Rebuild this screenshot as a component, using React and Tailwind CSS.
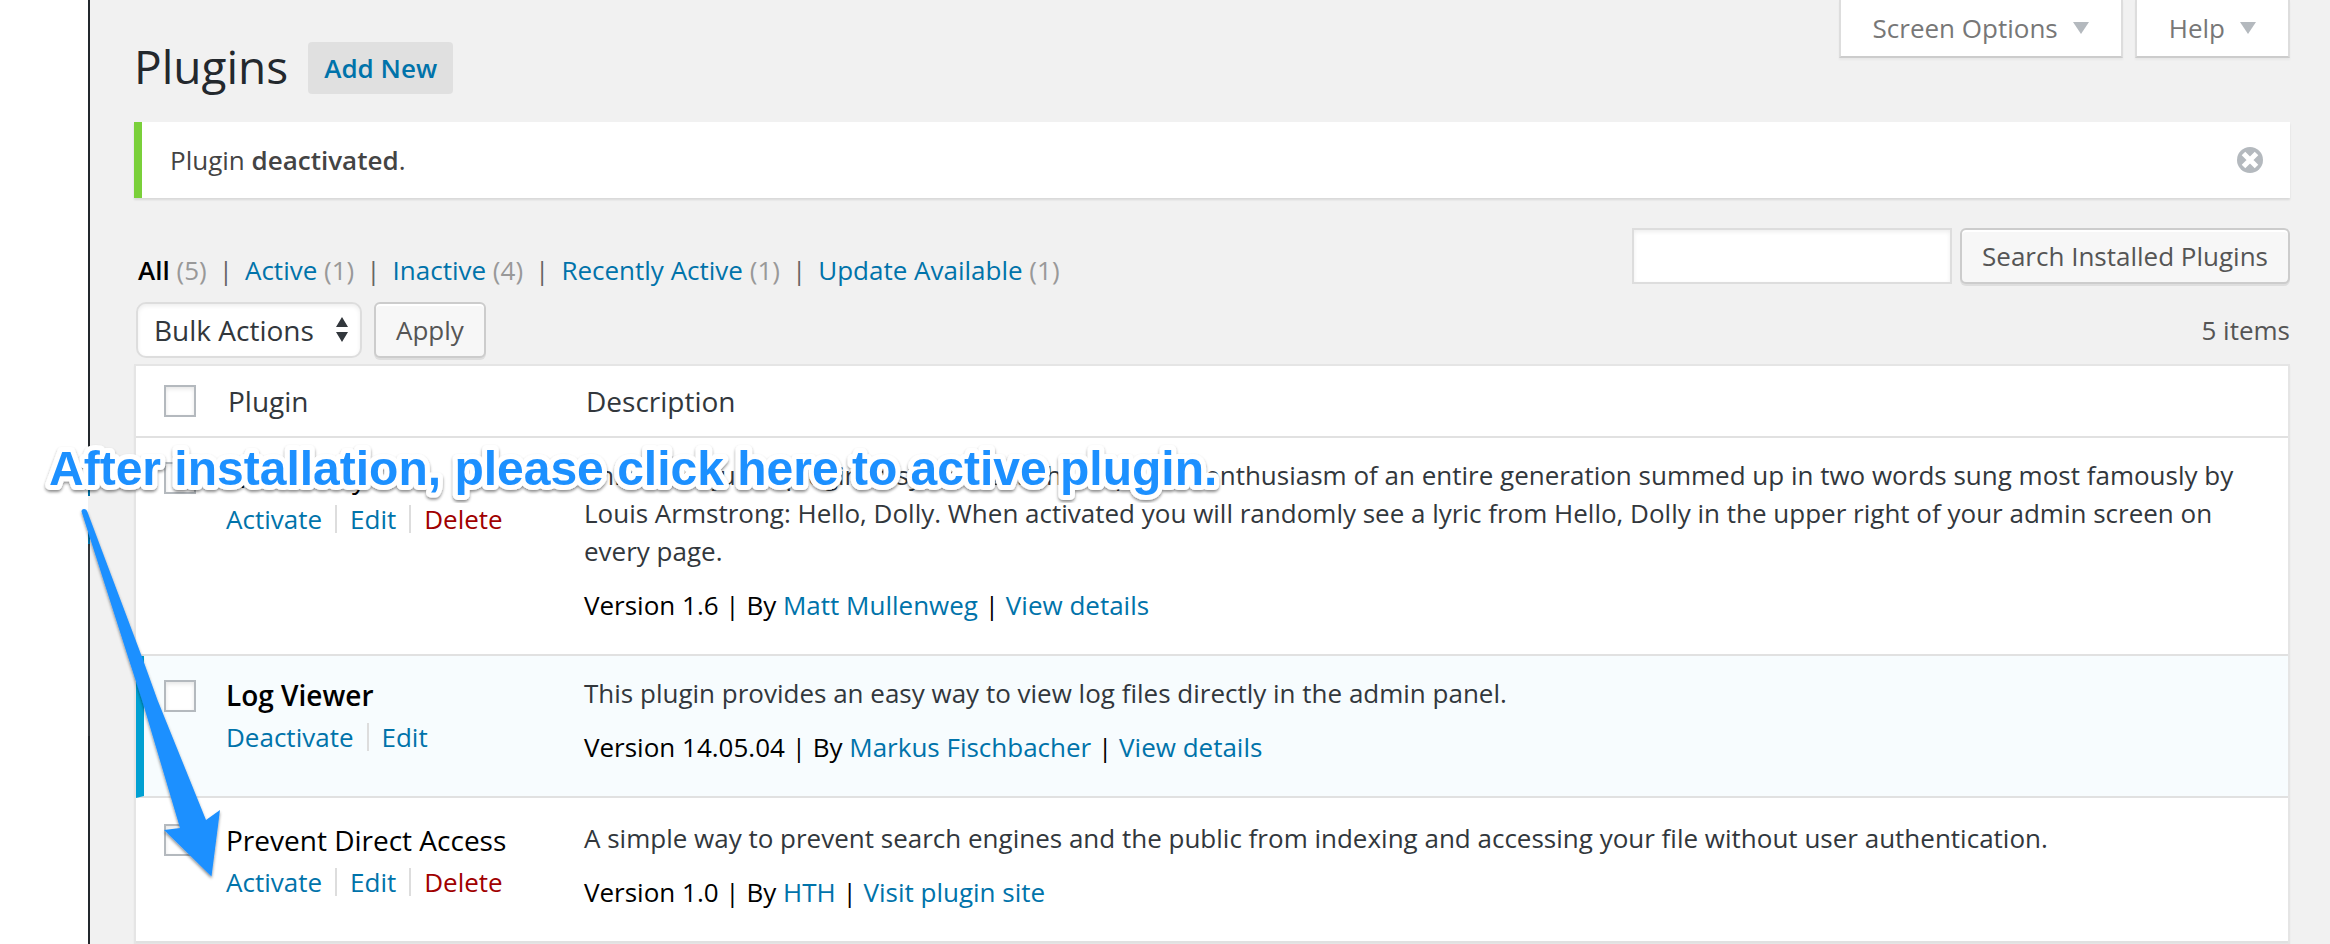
import { Fragment } from "react";

const plugins = [
  {
    id: "hello-dolly",
    name: "Hello Dolly",
    active: false,
    actions: ["Activate", "Edit", "Delete"],
    description:
      "This is not just a plugin, it symbolizes the hope and enthusiasm of an entire generation summed up in two words sung most famously by Louis Armstrong: Hello, Dolly. When activated you will randomly see a lyric from Hello, Dolly in the upper right of your admin screen on every page.",
    version: "1.6",
    author: "Matt Mullenweg",
    more: "View details",
  },
  {
    id: "log-viewer",
    name: "Log Viewer",
    active: true,
    actions: ["Deactivate", "Edit"],
    description: "This plugin provides an easy way to view log files directly in the admin panel.",
    version: "14.05.04",
    author: "Markus Fischbacher",
    more: "View details",
  },
  {
    id: "prevent-direct-access",
    name: "Prevent Direct Access",
    active: false,
    actions: ["Activate", "Edit", "Delete"],
    description:
      "A simple way to prevent search engines and the public from indexing and accessing your file without user authentication.",
    version: "1.0",
    author: "HTH",
    more: "Visit plugin site",
  },
];

const filters = [
  { label: "All", count: 5, current: true },
  { label: "Active", count: 1 },
  { label: "Inactive", count: 4 },
  { label: "Recently Active", count: 1 },
  { label: "Update Available", count: 1 },
];

const link = "text-[#0073aa]";
const button =
  "h-14 rounded-[6px] border-2 border-[#cccccc] bg-[#f7f7f7] text-[#555555] shadow-[inset_0_2px_0_#ffffff,0_2px_0_rgba(0,0,0,0.08)]";
const checkbox =
  "block size-8 appearance-none border-2 border-[#b4b9be] bg-white shadow-[inset_0_2px_4px_rgba(0,0,0,0.1)] checked:bg-[#1e8cbe]";

function ScreenTab({ children }) {
  return (
    <button
      type="button"
      className="flex h-[58px] items-center gap-[15px] border-2 border-t-0 border-[#dddddd] border-b-[#cccccc] bg-white px-8 text-[26px] text-[#777777] shadow-[0_2px_2px_rgba(0,0,0,0.04)]"
    >
      {children}
      <svg viewBox="0 0 16 12" className="h-3 w-4 fill-[#b4b9be]" aria-hidden="true">
        <path d="M0 0h16L8 12z" />
      </svg>
    </button>
  );
}

function PluginRow({ plugin, afterActive }) {
  const edge = plugin.active ? "border-l-8 border-l-[#00a0d2] pl-5" : "pl-7";
  const top = afterActive ? "pt-[21px]" : "pt-[18px]";
  return (
    <tr className={plugin.active ? "bg-[#f7fcfe]" : "bg-white"}>
      <td className={`${edge} ${afterActive ? "pt-[26px]" : "pt-6"} align-top`}>
        <input type="checkbox" aria-label={`Select ${plugin.name}`} className={checkbox} />
      </td>
      <td className={`${top} align-top`}>
        <strong className={`block text-[28px] leading-[42px] text-black ${plugin.active ? "font-semibold" : "font-normal"}`}>
          {plugin.name}
        </strong>
        <div className="flex items-center gap-[13px] leading-[42px]">
          {plugin.actions.map((action, i) => (
            <Fragment key={action}>
              {i > 0 && <span className="h-7 w-[2px] bg-[#dddddd]" />}
              <a href="#" className={action === "Delete" ? "text-[#a00000]" : link}>
                {action}
              </a>
            </Fragment>
          ))}
        </div>
      </td>
      <td className={`${top} pr-10 pb-[30px] align-top`}>
        <p className="leading-[38px] text-[#32373c]">{plugin.description}</p>
        <p className="mt-4 leading-[38px] text-black">
          Version {plugin.version} | By{" "}
          <a href="#" className={link}>
            {plugin.author}
          </a>{" "}
          |{" "}
          <a href="#" className={link}>
            {plugin.more}
          </a>
        </p>
      </td>
    </tr>
  );
}

function Callout() {
  return (
    <div className="pointer-events-none absolute top-[420px] left-[40px]">
      <svg width="1200" height="470" viewBox="40 420 1200 470" className="overflow-visible">
        <defs>
          <filter id="lift" x="-5%" y="-5%" width="110%" height="120%">
            <feDropShadow dx="0" dy="2" stdDeviation="1.5" floodColor="#000000" floodOpacity="0.45" />
          </filter>
        </defs>
        <path
          d="M81.500 511.500Q81.500 509 84 509Q86.500 509 87.500 512L105.500 560L142 657L157.500 700L206 820L220 810L211.500 876.500L164 830L180 828L142 700L128 657L97 560Z"
          fill="#1e90ff"
          filter="url(#lift)"
        />
        <text
          x="49"
          y="485"
          fontSize="48"
          fontWeight="700"
          fill="#1e90ff"
          stroke="#ffffff"
          strokeWidth="10"
          strokeLinejoin="round"
          paintOrder="stroke"
          filter="url(#lift)"
          className="font-['Liberation_Sans',Arial,sans-serif]"
        >
          After installation, please click here to active plugin.
        </text>
      </svg>
    </div>
  );
}

/* Right edge of the admin menu, with the notch beside the current item. */
function MenuEdge() {
  return (
    <div className="flex w-[90px] shrink-0 flex-col items-end">
      <div className="h-[476px] w-[2px] bg-[#23282d]" />
      <div className="h-5 w-[2px] bg-[#0073aa]" />
      <div className="h-[34px] w-[2px] bg-[#f1f1f1]" />
      <div className="h-3.5 w-[2px] bg-[#0073aa]" />
      <div className="h-48 w-[2px] bg-[#32373c]" />
      <div className="w-[2px] flex-1 bg-[#23282d]" />
    </div>
  );
}

export default function App() {
  return (
    <div className="relative flex h-screen overflow-hidden bg-white font-['Open_Sans',sans-serif] text-[26px] text-[#444444]">
      <MenuEdge />
      <div className="min-w-0 flex-1 bg-[#f1f1f1] pr-10 pl-11">
        <header className="flex h-[122px] items-start justify-between">
          <div className="flex items-start gap-5 pt-10">
            <h1 className="text-[46px] leading-[52px] text-[#23282d]">Plugins</h1>
            <button type="button" className="mt-[2px] h-[52px] rounded-[4px] bg-[#e0e0e0] px-4 font-semibold text-[#0073aa]">
              Add New
            </button>
          </div>
          <div className="flex gap-3">
            <ScreenTab>Screen Options</ScreenTab>
            <ScreenTab>Help</ScreenTab>
          </div>
        </header>

        <div className="flex h-[76px] items-center justify-between border-l-8 border-[#7ad03a] bg-white pr-[27px] pl-7 shadow-[0_2px_2px_rgba(0,0,0,0.1)]">
          <p>
            Plugin <strong className="font-semibold">deactivated</strong>.
          </p>
          <button type="button" aria-label="Dismiss">
            <svg viewBox="0 0 26 26" className="size-[26px]" aria-hidden="true">
              <circle cx="13" cy="13" r="13" fill="#b4b9be" />
              <path d="M6.500 6.500l13 13M19.500 6.500l-13 13" stroke="#ffffff" strokeWidth="5" />
            </svg>
          </button>
        </div>

        <div className="mt-[30px] flex h-[74px] items-start justify-between">
          <ul className="flex pt-6 pl-1 leading-[36px] text-[#666666]">
            {filters.map((f, i) => (
              <li key={f.label} className="flex">
                {i > 0 && <span className="px-3">|</span>}
                <a href="#" className={f.current ? "font-semibold text-black" : link}>
                  {f.label} <span className="font-normal text-[#999999]">({f.count})</span>
                </a>
              </li>
            ))}
          </ul>
          <form className="flex gap-2">
            <input
              type="search"
              aria-label="Search installed plugins"
              className="h-14 w-80 border-2 border-[#dddddd] bg-white px-2 shadow-[inset_0_2px_4px_rgba(0,0,0,0.07)]"
            />
            <button type="button" className={`${button} px-5`}>
              Search Installed Plugins
            </button>
          </form>
        </div>

        <div className="flex h-[62px] items-start justify-between">
          <div className="flex gap-3 pl-[2px]">
            <div className="relative">
              <select
                aria-label="Bulk actions"
                className="h-14 w-[226px] appearance-none rounded-[10px] border-2 border-[#dddddd] bg-white pl-4 text-[28px] text-[#32373c] shadow-[inset_0_2px_4px_rgba(0,0,0,0.07)]"
              >
                <option>Bulk Actions</option>
              </select>
              <svg
                viewBox="0 0 14 26"
                className="pointer-events-none absolute top-[15px] right-[13px] h-[26px] w-[14px] fill-[#32373c]"
                aria-hidden="true"
              >
                <path d="M1 10L7 0l6 10zM1 15h12L7 25z" />
              </svg>
            </div>
            <button type="button" className={`${button} px-5`}>
              Apply
            </button>
          </div>
          <p className="leading-[56px] text-[#555555]">5 items</p>
        </div>

        <table className="w-full table-fixed border-separate border-spacing-0 border-2 border-[#e5e5e5] bg-white shadow-[0_2px_2px_rgba(0,0,0,0.04)] [&_td]:border-b-2 [&_td]:border-b-[#e1e1e1]">
          <colgroup>
            <col className="w-[90px]" />
            <col className="w-[358px]" />
            <col />
          </colgroup>
          <thead>
            <tr className="h-[72px] text-left text-[28px] text-[#32373c] [&>th]:border-b-2 [&>th]:border-[#e1e1e1] [&>th]:font-normal">
              <th scope="col" className="pl-7">
                <input type="checkbox" aria-label="Select all plugins" className={checkbox} />
              </th>
              <th scope="col" className="pl-[2px]">
                Plugin
              </th>
              <th scope="col" className="pl-[2px]">
                Description
              </th>
            </tr>
          </thead>
          <tbody>
            {plugins.map((plugin, i) => (
              <PluginRow key={plugin.id} plugin={plugin} afterActive={i > 0 && plugins[i - 1].active} />
            ))}
          </tbody>
        </table>
      </div>
      <Callout />
    </div>
  );
}
